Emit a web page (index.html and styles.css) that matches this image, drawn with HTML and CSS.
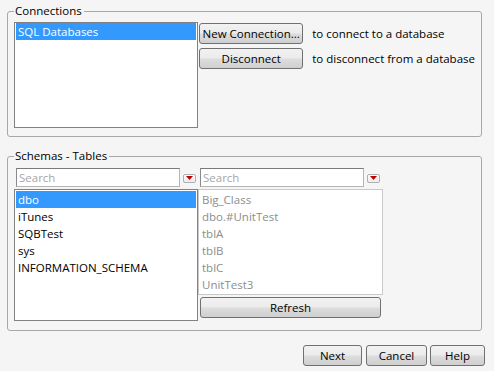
FILE: index.html
```html
<!DOCTYPE html>
<html>
<head>
<meta charset="utf-8">
<link rel="stylesheet" href="styles.css">
</head>
<body>
<div class="dialog">
  <fieldset class="group conn">
    <legend>Connections</legend>
    <div class="conn-body">
      <div class="list conn-list">
        <div class="row sel">SQL Databases</div>
      </div>
      <div class="actions">
        <div class="action"><button class="btn act-btn">New Connection...</button><span class="hint">to connect to a database</span></div>
        <div class="action"><button class="btn act-btn">Disconnect</button><span class="hint">to disconnect from a database</span></div>
      </div>
    </div>
  </fieldset>
  <fieldset class="group schemas">
    <legend>Schemas - Tables</legend>
    <div class="cols">
      <div class="col col1">
        <div class="search-row">
          <div class="search">Search</div>
          <span class="dd"><svg width="7" height="4" viewBox="0 0 7 4"><path d="M0 0H7L3.5 4Z" fill="#c00000"/></svg></span>
        </div>
        <div class="list schema-list">
          <div class="row sel">dbo</div>
          <div class="row">iTunes</div>
          <div class="row">SQBTest</div>
          <div class="row">sys</div>
          <div class="row">INFORMATION_SCHEMA</div>
        </div>
      </div>
      <div class="col col2">
        <div class="search-row">
          <div class="search">Search</div>
          <span class="dd"><svg width="7" height="4" viewBox="0 0 7 4"><path d="M0 0H7L3.5 4Z" fill="#c00000"/></svg></span>
        </div>
        <div class="list table-list">
          <div class="row">Big_Class</div>
          <div class="row">dbo.#UnitTest</div>
          <div class="row">tblA</div>
          <div class="row">tblB</div>
          <div class="row">tblC</div>
          <div class="row">UnitTest3</div>
        </div>
        <button class="btn refresh">Refresh</button>
      </div>
    </div>
  </fieldset>
  <div class="footer">
    <button class="btn fbtn next">Next</button>
    <button class="btn fbtn cancel">Cancel</button>
    <button class="btn fbtn help">Help</button>
  </div>
</div>
</body>
</html>
```
FILE: styles.css
```css
html, body {
  margin: 0;
  padding: 0;
  background: #f5f5f5;
}
body {
  font-family: "Open Sans", "Noto Sans", sans-serif;
  font-size: 11.5px;
  color: #000;
  width: 494px;
  height: 371px;
  overflow: hidden;
}
.dialog {
  padding: 3px 0 0 7px;
}
.group {
  margin: 0;
  width: 475px;
  box-sizing: border-box;
  border: 1px solid #a8a8a8;
  border-radius: 3px;
  padding: 3px 6px 8px 6px;
  min-width: 0;
}
.group legend {
  padding: 0 2px 0 1px;
  margin-left: 0;
  line-height: 16px;
  height: 16px;
}
.schemas {
  margin-top: 11px;
  padding-top: 4px;
  padding-bottom: 9px;
}
.conn-body {
  display: flex;
  align-items: flex-start;
}
.list {
  box-sizing: border-box;
  background: #fff;
  border: 1px solid #828282;
  padding: 0 1px;
}
.conn-list {
  width: 185px;
  height: 106px;
}
.row {
  height: 17px;
  line-height: 17px;
  padding-left: 2px;
  white-space: nowrap;
}
.row.sel {
  background: #3399ff;
  color: #fff;
}
.actions {
  margin-left: 1px;
  padding-top: 1px;
  display: flex;
  flex-direction: column;
  gap: 4px;
}
.action {
  display: flex;
  align-items: center;
}
.btn {
  font-family: inherit;
  font-size: 11.5px;
  color: #000;
  box-sizing: border-box;
  height: 21px;
  padding: 0;
  border: 1px solid #707070;
  border-radius: 3px;
  background: linear-gradient(#f2f2f2 0%, #ebebeb 48%, #dddddd 52%, #cfcfcf 100%);
  line-height: 19px;
  white-space: nowrap;
}
.act-btn {
  width: 104px;
}
.hint {
  margin-left: 9px;
  white-space: nowrap;
}
.cols {
  display: flex;
}
.col1 {
  width: 184px;
}
.col2 {
  width: 185px;
}
.search-row {
  display: flex;
  align-items: center;
  padding-left: 2px;
  gap: 3px;
}
.search {
  box-sizing: border-box;
  width: 164px;
  height: 19px;
  line-height: 17px;
  border: 1px solid #7a7a7a;
  border-color: #7a7a7a #b5b5b5 #b5b5b5 #8a8a8a;
  background: #fff;
  color: #a6a6a6;
  padding-left: 2px;
}
.dd {
  box-sizing: border-box;
  width: 13px;
  height: 9px;
  border: 1px solid #b0b0b0;
  border-radius: 2px;
  background: linear-gradient(#ffffff, #ececec);
  display: flex;
  align-items: center;
  justify-content: center;
  margin-top: 1px;
}
.dd svg {
  display: block;
}
.schema-list {
  margin-top: 2px;
  height: 132px;
  padding-top: 1px;
}
.table-list {
  margin-top: 2px;
  height: 106px;
  border-color: #c9c9c9;
  color: #8d8d8d;
  padding-top: 1px;
}
.refresh {
  margin: 2px 0 0 2px;
  width: 181px;
  display: block;
}
.footer {
  display: flex;
  margin-top: 14px;
  padding-left: 296px;
}
.fbtn {
  height: 21px;
}
.next {
  width: 59px;
}
.cancel {
  width: 61px;
  margin-left: 4px;
}
.help {
  width: 55px;
  margin-left: 3px;
}
```
